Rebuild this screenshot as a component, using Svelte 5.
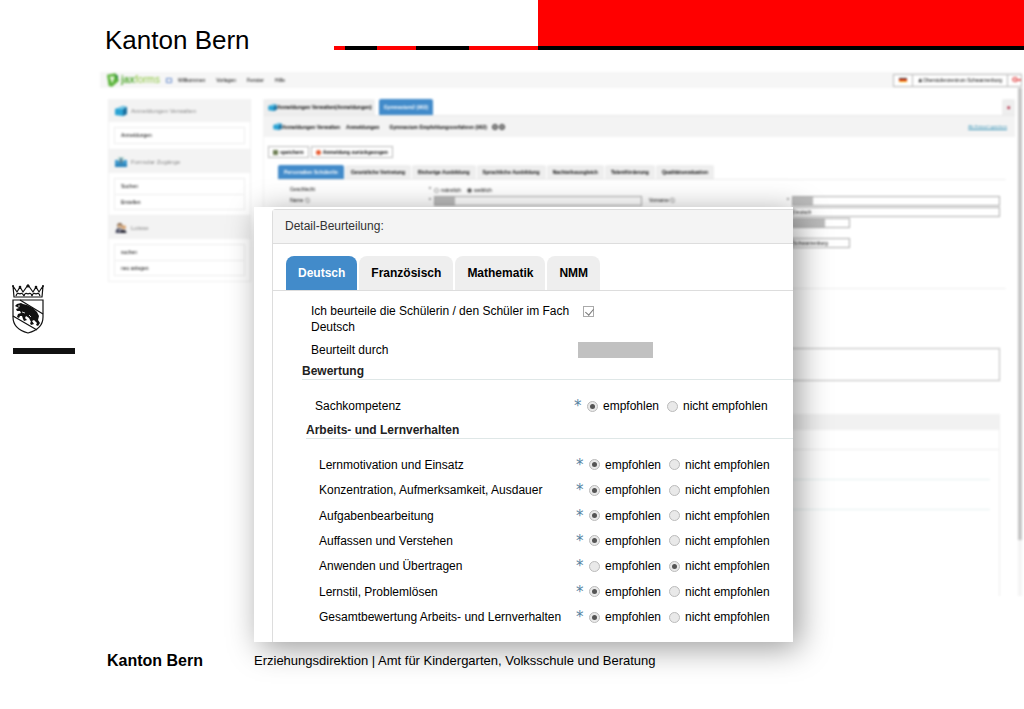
<script>
  const nav = ['Willkommen', 'Vorlagen', 'Fenster', 'Hilfe'];

  const menus = [
    { title: 'Anmeldungen Verwalten', icon: 'mail', items: ['Anmeldungen'] },
    { title: 'Formular Zugänge', icon: 'inbox', items: ['Suchen', 'Erstellen'] },
    { title: 'Lotsse', icon: 'people', items: ['suchen', 'neu anlegen'] }
  ];

  const formTabs = [
    'Personalien Schüler/in',
    'Gesetzliche Vertretung',
    'Bisherige Ausbildung',
    'Sprachliche Ausbildung',
    'Nachteilsausgleich',
    'Talentförderung',
    'Qualitätsevaluation'
  ];

  const subjects = ['Deutsch', 'Französisch', 'Mathematik', 'NMM'];
  let subject = $state('Deutsch');

  let groups = $state([
    {
      title: 'Bewertung',
      rows: [{ label: 'Sachkompetenz', value: 'empfohlen' }]
    },
    {
      title: 'Arbeits- und Lernverhalten',
      rows: [
        { label: 'Lernmotivation und Einsatz', value: 'empfohlen' },
        { label: 'Konzentration, Aufmerksamkeit, Ausdauer', value: 'empfohlen' },
        { label: 'Aufgabenbearbeitung', value: 'empfohlen' },
        { label: 'Auffassen und Verstehen', value: 'empfohlen' },
        { label: 'Anwenden und Übertragen', value: 'nicht empfohlen' },
        { label: 'Lernstil, Problemlösen', value: 'empfohlen' },
        { label: 'Gesamtbewertung Arbeits- und Lernverhalten', value: 'empfohlen' }
      ]
    }
  ]);
</script>

{#snippet icon(name)}
  {#if name === 'mail'}
    <svg class="icon" viewBox="0 0 12 10">
      <path d="M0 3 8 0 12 1V8L8 10 0 9Z" fill="#2ba3d4" />
      <path d="M8 3 12 1V8L8 10Z" fill="#1b6f9e" />
      <path d="M1 3 8 1 11 1 8 3Z" fill="#8fd6ee" />
    </svg>
  {:else if name === 'inbox'}
    <svg class="icon" viewBox="0 0 12 10">
      <path d="M0 3H12V10H0Z" fill="#3f9bd0" />
      <path d="M3 0H9V4H3Z" fill="#bcd9d4" />
      <path d="M5 1H7V4H9L6 7 3 4H5Z" fill="#4c7f9b" />
      <path d="M0 7H12V10H0Z" fill="#2c84bb" />
    </svg>
  {:else}
    <svg class="icon" viewBox="0 0 13 12">
      <circle cx="5" cy="3" r="3" fill="#7b5a3d" />
      <circle cx="5" cy="4" r="2" fill="#f0c9a0" />
      <path d="M0 12Q0 6 5 6 8 6 8 12Z" fill="#45475c" />
      <circle cx="10" cy="5" r="2.4" fill="#d9a06a" />
      <path d="M6 12Q6 8 9 8 13 8 13 12Z" fill="#2c2c38" />
      <path d="M4 7H6L5 11Z" fill="#fff" />
    </svg>
  {/if}
{/snippet}

<div class="slide">
  <header class="banner">
    <h1>Kanton Bern</h1>
    <div class="stripe"></div>
    <div class="block"></div>
  </header>

  <div class="middle">
    <aside class="crest">
      <svg viewBox="0 0 32 50" width="32" height="50" role="img" aria-label="Wappen Kanton Bern">
        <g fill="none" stroke="#111" stroke-width="1.2">
          <path d="M2 13 1 2 5 8 8 3 11 8 16 1 21 8 24 3 27 8 31 2 30 13Z" />
          <path d="M4 12Q5 8 8 10M12 12Q10 8 8 10M12 12Q13 8 16 10M20 12Q19 8 16 10M20 12Q21 8 24 10M28 12Q27 8 24 10" />
          <path d="M1 16H31V33Q31 45 16 49 1 45 1 33Z" />
          <path d="M8 16 31 30M1 32 25 46" />
        </g>
        <g fill="#111">
          <circle cx="1" cy="2" r="1" />
          <circle cx="8" cy="3" r="1.3" />
          <circle cx="16" cy="2" r="1.6" />
          <circle cx="24" cy="3" r="1.3" />
          <circle cx="31" cy="2" r="1" />
          <path d="M5 20 9 19 11 20 15 21 21 24 25 28 27 32 26 36 28 39 26 42 24 41 25 39 22 36 20 37 22 40 19 41 18 39 19 38 17 34 14 32 13 34 15 36 12 37 11 35 10 32 8 32 7 34 5 33 6 30 9 29 8 27 5 27 4 25 7 24 5 23 3 22Z" />
        </g>
        <path d="M6 22H8M10 28 13 29M17 31 19 33" stroke="#fff" stroke-width="0.8" />
      </svg>
      <div class="bar"></div>
    </aside>

    <div class="stage">
      <div class="app">
        <div class="topbar">
          <div class="brand">
            <svg viewBox="0 0 14 16" width="12" height="14">
              <path d="M0 2 10 0 14 9 6 16 2 15Z" fill="#5db53c" />
              <path d="M3 4H9L6 12Z" fill="#e9f7df" />
              <path d="M9 1 13 3 12 9Z" fill="#2e8b3d" />
            </svg>
            <span><b>jax</b>forms</span>
          </div>
          <i class="doc"></i>
          <nav>
            {#each nav as item}
              <a href="#{item}">{item}</a>
            {/each}
          </nav>
          <div class="account">
            <button aria-label="Sprache"><i class="flag"></i></button>
            <button>♟ Oberstufenzentrum Schwarzenburg</button>
            <button class="exit" aria-label="Abmelden">G•</button>
          </div>
        </div>

        <div class="columns">
          <div class="sidebar">
            {#each menus as menu}
              <section>
                <h2>{@render icon(menu.icon)}{menu.title}</h2>
                <ul>
                  {#each menu.items as item}
                    <li><a href="#{item}">{item}</a></li>
                  {/each}
                </ul>
              </section>
            {/each}
          </div>

          <div class="content">
            <div class="window-tabs">
              <button class="window-tab">{@render icon('mail')}Anmeldungen Verwalten(Anmeldungen)</button>
              <button class="window-tab active">Gymnasium2 (902)</button>
              <button class="window-tab close" aria-label="Schliessen">■</button>
            </div>
            <div class="crumbs">
              {@render icon('mail')}
              <span>Anmeldungen Verwalten</span>
              <span>Anmeldungen</span>
              <span class="last">Gymnasium Empfehlungsverfahren (902)</span>
              <i class="pager"></i>
              <i class="pager"></i>
              <a href="#favorit">Als Entwurf speichern</a>
            </div>
            <div class="toolbar">
              <button><i class="disk"></i>speichern</button>
              <button><i class="stop"></i>Anmeldung zurückgezogen</button>
            </div>
            <div class="form-tabs">
              {#each formTabs as tab, i}
                <button class:active={i === 0}>{tab}</button>
              {/each}
            </div>

            <div class="form">
              <span>Geschlecht</span>
              <div class="field">
                <em>*</em>
                <label><input type="radio" name="sex" value="m" />männlich</label>
                <label><input type="radio" name="sex" value="w" checked />weiblich</label>
              </div>
              <label class="first" for="name">Name ⓘ</label>
              <div class="field"><em>*</em><input id="name" class="redacted" type="text" /></div>
              <label class="second" for="vorname">Vorname ⓘ</label>
              <div class="field"><em>*</em><input id="vorname" class="redacted" type="text" /></div>
              <div class="field right">
                <em></em>
                <select aria-label="Sprache"><option>Deutsch</option></select>
              </div>
              <div class="field right short">
                <em></em><input class="redacted wide" type="text" aria-label="Datum" />
              </div>
              <div class="field right short">
                <em></em><input type="text" aria-label="Ort" value="Schwarzenburg" />
              </div>
            </div>

            <div class="remarks">
              <textarea aria-label="Bemerkungen"></textarea>
            </div>
            <div class="details">
              <div class="details-head"></div>
              <div class="line"></div>
              <div class="line inset"></div>
              <div class="line inset"></div>
            </div>
          </div>

          <div class="scroll"><div class="thumb"></div></div>
        </div>
      </div>

      <div class="dialog">
        <div class="panel">
          <h2>Detail-Beurteilung:</h2>
          <div class="tabs" role="tablist">
            {#each subjects as name}
              <button
                role="tab"
                aria-selected={subject === name}
                class:active={subject === name}
                onclick={() => (subject = name)}
              >{name}</button>
            {/each}
          </div>

          <div class="intro">
            <label for="judge">Ich beurteile die Schülerin / den Schüler im Fach {subject}</label>
            <input id="judge" type="checkbox" checked disabled />
            <span>Beurteilt durch</span>
            <div class="blank"></div>
          </div>

          {#each groups as group, g}
            <section class="group" class:nested={g > 0}>
              <h3>{group.title}</h3>
              <div class="rows">
                {#each group.rows as row, r}
                  <div class="row" role="radiogroup" aria-label={row.label}>
                    <span>{row.label}</span>
                    <em>*</em>
                    {#each ['empfohlen', 'nicht empfohlen'] as option}
                      <label>
                        <input type="radio" name="rating-{g}-{r}" value={option} bind:group={row.value} disabled />
                        {option}
                      </label>
                    {/each}
                  </div>
                {/each}
              </div>
            </section>
          {/each}
        </div>
      </div>
    </div>
  </div>

  <footer>
    <strong>Kanton Bern</strong>
    <span>Erziehungsdirektion | Amt für Kindergarten, Volksschule und Beratung</span>
  </footer>
</div>

<style>
  :global(body) {
    margin: 0;
    background: #fff;
  }

  .slide {
    min-height: 100vh;
    overflow: hidden;
    font-family: 'Liberation Sans', Arial, sans-serif;
    color: #000;
  }

  .slide * {
    box-sizing: border-box;
  }

  button,
  input,
  select,
  textarea {
    font: inherit;
    margin: 0;
    padding: 0;
    border: none;
    border-radius: 0;
    background: none;
    color: inherit;
  }

  a {
    color: inherit;
    text-decoration: none;
  }

  em {
    font-style: normal;
  }

  h1,
  h2,
  h3,
  ul {
    margin: 0;
    padding: 0;
    font-weight: normal;
    list-style: none;
  }

  /* banner */
  .banner {
    display: grid;
    grid-template-columns: 334px 204px 1fr;
    grid-template-rows: 50px;
    margin-bottom: 22px;
  }

  h1 {
    padding: 24px 0 0 105px;
    font-size: 26px;
    line-height: 32px;
    white-space: nowrap;
  }

  .stripe {
    align-self: end;
    height: 4px;
    background: linear-gradient(to right, #f00 11px, #000 11px 43px, #f00 43px 82px, #000 82px 135px, #f00 135px);
  }

  .block {
    background: #f00;
    border-bottom: 4px solid #000;
  }

  .middle {
    display: grid;
    grid-template-columns: 100px 1fr;
  }

  .crest {
    padding: 212px 0 0 12px;
  }

  .crest svg {
    display: block;
  }

  .bar {
    width: 62px;
    height: 6px;
    margin: 14px 0 0 1px;
    background: #111;
  }

  /* application window behind the dialog */
  .stage {
    display: grid;
    grid-template-columns: 154px 7fr 3fr;
  }

  .app {
    grid-area: 1 / 1 / 2 / -1;
    height: 524px;
    margin-right: 2px;
    overflow: hidden;
    filter: blur(1px);
    font-size: 5px;
    line-height: 8px;
  }

  .topbar {
    display: flex;
    align-items: center;
    height: 16px;
    padding-left: 7px;
    background: #f6f6f6;
  }

  .brand {
    display: flex;
    align-items: center;
    gap: 2px;
    width: 59px;
    font-size: 10px;
    color: #8cc63f;
  }

  .brand b {
    color: #55aa33;
  }

  .doc {
    width: 6px;
    height: 5px;
    margin-right: 6px;
    border: 1px solid #6b8fd0;
  }

  nav {
    display: flex;
    gap: 11px;
  }

  .account {
    display: flex;
    height: 13px;
    margin-left: auto;
    border: 1px solid #bbb;
    background: #fff;
  }

  .account button {
    padding: 0 5px;
    border-right: 1px solid #bbb;
  }

  .account .exit {
    padding: 0 0 0 4px;
    border-right: none;
    color: #d22;
    font-weight: bold;
    font-size: 8px;
  }

  .flag {
    display: block;
    width: 8px;
    height: 4px;
    background: linear-gradient(#333 1px, #e33b1e 1px 3px, #f5b800 3px);
  }

  .icon {
    width: 12px;
    height: 10px;
    flex: none;
  }

  .columns {
    display: grid;
    grid-template-columns: 143px 1fr 4px;
    height: 508px;
    padding-left: 8px;
  }

  .sidebar {
    padding-top: 11px;
  }

  .sidebar section {
    border: 1px solid #f0f0f0;
    border-top: none;
  }

  .sidebar h2 {
    display: flex;
    align-items: center;
    gap: 4px;
    height: 23px;
    padding-left: 6px;
    background: #f3f3f3;
    color: #888;
    font-size: 6px;
  }

  .sidebar ul {
    margin: 5px;
    border: 1px solid #eee;
  }

  .sidebar li {
    height: 15px;
    padding: 3px 6px;
  }

  .sidebar li + li {
    border-top: 1px solid #eee;
  }

  .content {
    margin: 11px 3px 0 12px;
    border-left: 1px solid #f3f3f3;
  }

  .window-tabs {
    display: flex;
    gap: 4px;
    height: 16px;
    font-weight: bold;
  }

  .window-tab {
    display: flex;
    align-items: center;
    padding: 0 5px;
    background: #eee;
    border-radius: 2px 2px 0 0;
  }

  .window-tab:first-child {
    padding: 0 3px 0 4px;
  }

  .window-tab .icon,
  .crumbs .icon {
    width: 9px;
    height: 7px;
  }

  .window-tab.active,
  .form-tabs .active {
    background: #428bca;
    color: #fff;
  }

  .window-tab.close {
    margin-left: auto;
    color: #b0203c;
  }

  .crumbs {
    display: flex;
    align-items: center;
    height: 22px;
    padding: 0 8px 0 9px;
    background: #f3f3f3;
    border-top: 1px solid #e8e8e8;
    font-weight: bold;
  }

  .crumbs span {
    margin-right: 6px;
  }

  .crumbs .last {
    margin: 0 4px;
  }

  .pager {
    width: 6px;
    height: 6px;
    margin-left: 1px;
    border: 1px solid #333;
    border-radius: 50%;
    background: #999;
  }

  .crumbs a {
    margin-left: auto;
    color: #2f8fb5;
    font-weight: normal;
    font-size: 4px;
    text-decoration: underline;
  }

  .toolbar {
    display: flex;
    gap: 2px;
    padding: 9px 4px 7px;
  }

  .toolbar button {
    display: flex;
    align-items: center;
    gap: 2px;
    height: 12px;
    padding: 0 4px;
    border: 1px solid #bbb;
    font-weight: bold;
  }

  .disk,
  .stop {
    width: 5px;
    height: 5px;
    background: #6f7f55;
  }

  .stop {
    border-radius: 50%;
    background: #e8582c;
  }

  .form-tabs {
    display: flex;
    gap: 1px;
    height: 15px;
    margin: 0 9px 0 14px;
    border-bottom: 1px solid #eee;
    font-weight: bold;
  }

  .form-tabs button {
    padding: 0 6px;
    background: #eee;
    border-radius: 2px 2px 0 0;
  }

  .form {
    display: grid;
    grid-template-columns: 136px 216px 142px 1fr;
    row-gap: 1px;
    height: 109px;
    align-content: start;
    margin: 0 9px 0 14px;
    padding: 5px 6px 0 12px;
    border-bottom: 1px solid #eee;
  }

  .form .first {
    grid-column: 1;
  }

  .form .second {
    padding-left: 7px;
  }

  .field {
    display: flex;
    height: 10px;
  }

  .field.right {
    grid-column: 4;
  }

  .field.short {
    width: 66px;
  }

  .field.short + .short {
    margin-top: 9px;
  }

  .field em {
    width: 8px;
    flex: none;
    text-align: center;
  }

  .field label {
    display: flex;
    align-items: center;
    gap: 2px;
    margin-right: 6px;
  }

  .field input[type='text'],
  .field select {
    flex: 1;
    width: 10px;
    appearance: none;
    border: 1px solid #aaa;
    background-color: #fff;
  }

  .field .redacted {
    background-image: linear-gradient(to right, #bbb 20px, transparent 20px);
  }

  .field .wide {
    background-image: linear-gradient(to right, #bbb 32px, transparent 32px);
  }

  .field input[type='radio'] {
    appearance: none;
    width: 5px;
    height: 5px;
    border: 1px solid #999;
    border-radius: 50%;
  }

  .field input[type='radio']:checked {
    background: #444;
  }

  .remarks {
    padding: 59px 15px 33px 27px;
  }

  textarea {
    display: block;
    width: 100%;
    height: 33px;
    border: 1px solid #bbb;
    resize: none;
  }

  .details {
    height: 200px;
    margin: 0 15px 0 14px;
    border-right: 1px solid #eee;
  }

  .details-head {
    height: 16px;
    background: #f1f1f1;
  }

  .line {
    height: 20px;
    border-bottom: 1px solid #eee;
  }

  .line.inset {
    height: 30px;
    margin-right: 9px;
    border-color: #e4efef;
  }

  .scroll {
    background: #f4f4f4;
  }

  .thumb {
    height: 452px;
    background: #c4c4c4;
  }

  /* dialog */
  .dialog {
    position: relative;
    grid-area: 1 / 2;
    height: 435px;
    margin-top: 135px;
    padding: 2px 0 0 18px;
    background: #fff;
    box-shadow: 6px 6px 30px rgba(0, 0, 0, 0.4);
    font-size: 12px;
    line-height: 16px;
  }

  .panel {
    height: 100%;
    border: 1px solid #ddd;
    border-width: 1px 0 0 1px;
    border-radius: 4px 0 0 0;
  }

  .panel h2 {
    height: 34px;
    padding: 8px 12px;
    background: #f4f4f4;
    border-bottom: 1px solid #ddd;
    font-size: 12px;
    color: #333;
  }

  .tabs {
    display: flex;
    gap: 2px;
    margin-top: 12px;
    padding-left: 13px;
    border-bottom: 1px solid #ddd;
  }

  .tabs button {
    height: 34px;
    padding: 0 12px;
    border-radius: 8px 8px 0 0;
    background: #eee;
    font-weight: bold;
  }

  .tabs .active {
    background: #428bca;
    color: #fff;
  }

  .intro {
    display: grid;
    grid-template-columns: 267px 1fr;
    row-gap: 7px;
    padding: 12px 0 5px 38px;
  }

  .intro label {
    padding-right: 8px;
  }

  .blank {
    width: 75px;
    height: 16px;
    background: #c1c1c1;
  }

  input[type='checkbox'] {
    appearance: none;
    width: 11px;
    height: 11px;
    margin: 3px 5px;
    border: 1px solid #aaa;
  }

  input[type='checkbox']:checked::before {
    content: '';
    display: block;
    width: 4px;
    height: 7px;
    margin: 0 3px;
    border: solid #777;
    border-width: 0 1px 1px 0;
    transform: rotate(40deg);
  }

  .group {
    margin-left: 29px;
  }

  .group.nested {
    margin-left: 33px;
  }

  h3 {
    height: 17px;
    border-bottom: 1px solid #dfe7e7;
    font-size: 12px;
    font-weight: bold;
    color: #222;
  }

  .rows {
    display: grid;
    grid-auto-rows: 1fr;
    height: 42px;
    padding: 13px 0 3px 13px;
  }

  .nested .rows {
    height: 191px;
    padding: 13px 0 0 13px;
  }

  .row {
    display: grid;
    grid-template-columns: 259px 13px 80px 1fr;
    align-items: center;
    white-space: nowrap;
  }

  .nested .row {
    grid-template-columns: 257px 13px 80px 1fr;
  }

  .row em {
    font-family: 'DejaVu Sans', sans-serif;
    font-size: 15px;
    color: #55829f;
  }

  .row label {
    display: flex;
    align-items: center;
    gap: 5px;
  }

  .row input {
    display: grid;
    place-content: center;
    appearance: none;
    width: 11px;
    height: 11px;
    border: 1px solid #bbb;
    border-radius: 50%;
    background: #e9e9e9;
  }

  .row input:checked::before {
    content: '';
    width: 5px;
    height: 5px;
    border-radius: 50%;
    background: #555;
  }

  footer {
    position: relative;
    display: grid;
    grid-template-columns: 147px 1fr;
    align-items: center;
    padding: 9px 0 0 107px;
    font-size: 13px;
    line-height: 20px;
  }

  footer strong {
    font-size: 16px;
  }
</style>
